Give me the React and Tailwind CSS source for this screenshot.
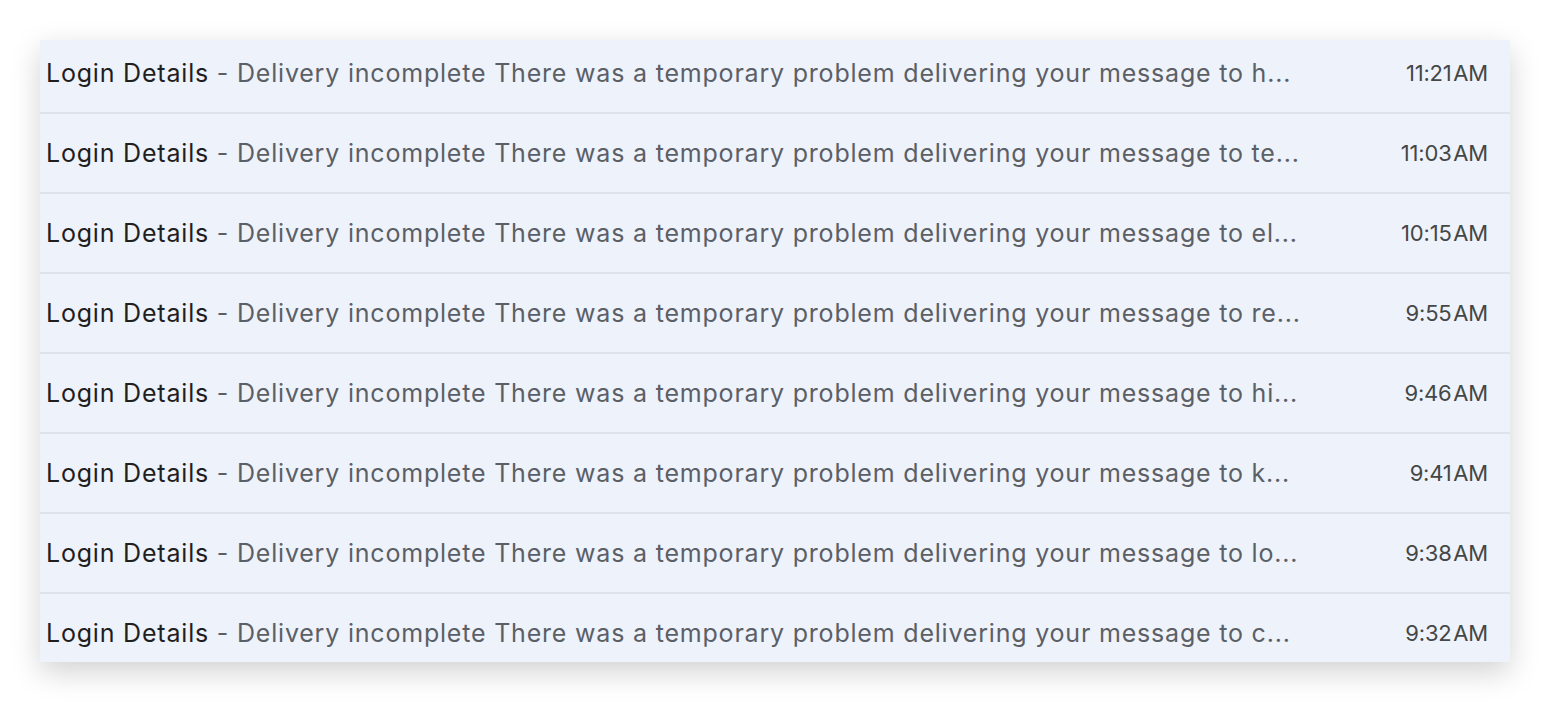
import React from "react";

const rows = [
  { to: "h", time: "11:21 AM" },
  { to: "te", time: "11:03 AM" },
  { to: "el", time: "10:15 AM" },
  { to: "re", time: "9:55 AM" },
  { to: "hi", time: "9:46 AM" },
  { to: "k", time: "9:41 AM" },
  { to: "lo", time: "9:38 AM" },
  { to: "c", time: "9:32 AM" },
];

const MailRow = ({ to, time }) => (
  <div className="h-[80px] flex items-center border-b-2 border-[#dfe4ec] bg-[#eef2fb]">
    <div className="flex-1 min-w-0 pl-[6px] pt-[1px] text-[25px] tracking-[0.8px] leading-none whitespace-nowrap" style={{ fontFamily: "Inter, sans-serif" }}>
      <span className="text-[#1f1f1f]">Login Details</span>
      <span className="text-[#5b5f66]">
        {" "}- Delivery incomplete There was a temporary problem delivering your message to {to}...
      </span>
    </div>
    <div className="w-[120px] pr-[22px] pt-[1px] text-right text-[22px] text-[#444746] tracking-[-0.2px]" style={{ fontFamily: "Inter, sans-serif" }}>
      {time.replace(" ", "\u200a")}
    </div>
  </div>
);

const App = () => {
  return (
    <div className="w-[1550px] h-[702px] bg-white pt-[40px] pl-[40px]">
      <div className="w-[1470px] h-[622px] overflow-hidden bg-[#eef2fb] shadow-[0_10px_28px_rgba(0,0,0,0.18)]">
        <div className="-mt-[6px]">
          {rows.map((r, i) => (
            <MailRow key={i} to={r.to} time={r.time} />
          ))}
        </div>
      </div>
    </div>
  );
};

export default App;
